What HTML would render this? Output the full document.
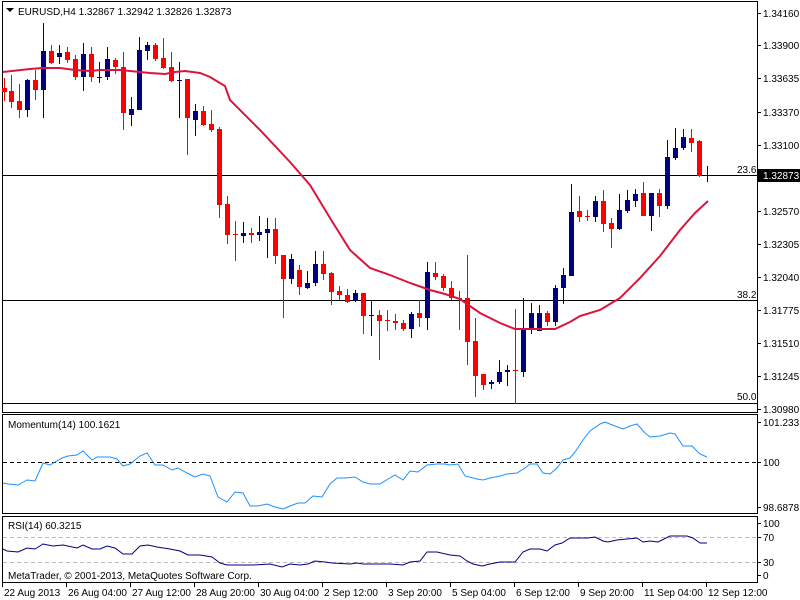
<!DOCTYPE html>
<html><head><meta charset="utf-8"><style>
body{margin:0;background:#fff;}
svg{display:block;font-family:"Liberation Sans",sans-serif;font-size:10px;}
</style></head><body>
<svg width="800" height="600" xmlns="http://www.w3.org/2000/svg">
<rect width="800" height="600" fill="#fff"/>
<g stroke="#000" fill="none" stroke-width="1">
<rect x="2.5" y="1.5" width="755" height="411"/>
<rect x="2.5" y="414.5" width="755" height="99"/>
<rect x="2.5" y="516.5" width="755" height="66"/>
<line x1="2" y1="175.5" x2="757" y2="175.5"/>
<line x1="2" y1="300.5" x2="757" y2="300.5"/>
<line x1="2" y1="403.5" x2="757" y2="403.5"/>
</g>
<g stroke="#000">
<line x1="757" y1="13.5" x2="761" y2="13.5"/><line x1="757" y1="45.5" x2="761" y2="45.5"/><line x1="757" y1="78.5" x2="761" y2="78.5"/><line x1="757" y1="112.5" x2="761" y2="112.5"/><line x1="757" y1="145.5" x2="761" y2="145.5"/><line x1="757" y1="211.5" x2="761" y2="211.5"/><line x1="757" y1="244.5" x2="761" y2="244.5"/><line x1="757" y1="277.5" x2="761" y2="277.5"/><line x1="757" y1="310.5" x2="761" y2="310.5"/><line x1="757" y1="343.5" x2="761" y2="343.5"/><line x1="757" y1="376.5" x2="761" y2="376.5"/><line x1="757" y1="409.5" x2="761" y2="409.5"/>
<line x1="757" y1="422.5" x2="761" y2="422.5"/><line x1="757" y1="462.5" x2="761" y2="462.5"/><line x1="757" y1="507.5" x2="761" y2="507.5"/>
<line x1="757" y1="523.5" x2="761" y2="523.5"/><line x1="757" y1="537.5" x2="761" y2="537.5"/><line x1="757" y1="562.5" x2="761" y2="562.5"/><line x1="757" y1="575.5" x2="761" y2="575.5"/>
<line x1="2.5" y1="582" x2="2.5" y2="587"/><line x1="66.5" y1="582" x2="66.5" y2="587"/><line x1="130.5" y1="582" x2="130.5" y2="587"/><line x1="194.5" y1="582" x2="194.5" y2="587"/><line x1="258.5" y1="582" x2="258.5" y2="587"/><line x1="322.5" y1="582" x2="322.5" y2="587"/><line x1="386.5" y1="582" x2="386.5" y2="587"/><line x1="450.5" y1="582" x2="450.5" y2="587"/><line x1="514.5" y1="582" x2="514.5" y2="587"/><line x1="578.5" y1="582" x2="578.5" y2="587"/><line x1="642.5" y1="582" x2="642.5" y2="587"/><line x1="706.5" y1="582" x2="706.5" y2="587"/>
</g>
<g fill="#000">
<text x="763" y="17">1.34160</text><text x="763" y="49">1.33900</text><text x="763" y="82">1.33635</text><text x="763" y="116">1.33370</text><text x="763" y="149">1.33100</text><text x="763" y="215">1.32570</text><text x="763" y="248">1.32305</text><text x="763" y="281">1.32040</text><text x="763" y="314">1.31775</text><text x="763" y="347">1.31510</text><text x="763" y="380">1.31245</text><text x="763" y="413">1.30980</text>
<text x="763" y="426">101.2331</text><text x="763" y="466">100</text><text x="763" y="511">98.6878</text>
<text x="763" y="527">100</text><text x="763" y="541">70</text><text x="763" y="566">30</text><text x="763" y="579">0</text>
<text x="737" y="173">23.6</text><text x="737" y="298">38.2</text><text x="737" y="400">50.0</text>
<text x="4" y="596">22 Aug 2013</text><text x="68" y="596">26 Aug 04:00</text><text x="132" y="596">27 Aug 12:00</text><text x="196" y="596">28 Aug 20:00</text><text x="260" y="596">30 Aug 04:00</text><text x="324" y="596">2 Sep 12:00</text><text x="388" y="596">3 Sep 20:00</text><text x="452" y="596">5 Sep 04:00</text><text x="516" y="596">6 Sep 12:00</text><text x="580" y="596">9 Sep 20:00</text><text x="644" y="596">11 Sep 04:00</text><text x="708" y="596">12 Sep 12:00</text>
<text x="18" y="15">EURUSD,H4  1.32867 1.32942 1.32826 1.32873</text>
<path d="M6 8h8l-4 4z"/>
<text x="8" y="428">Momentum(14) 100.1621</text>
<text x="8" y="529">RSI(14) 60.3215</text>
<text x="8" y="579">MetaTrader, © 2001-2013, MetaQuotes Software Corp.</text>
</g>
<rect x="757" y="169" width="43" height="13" fill="#000"/>
<text x="763" y="179" fill="#fff">1.32873</text>
<g stroke-dasharray="4,3">
<line x1="3" y1="462.5" x2="757" y2="462.5" stroke="#000"/>
<line x1="3" y1="537.5" x2="757" y2="537.5" stroke="#bbb"/>
<line x1="3" y1="562.5" x2="757" y2="562.5" stroke="#bbb"/>
</g>
<!-- red candles -->
<path stroke="#ff0000" fill="none" d="M4.5 78V101M11.5 75V108M19.5 84V118M35.5 70V100M51.5 45V64M67.5 47V63M75.5 55V80M91.5 47V82M115.5 58V74M123.5 52V130M155.5 43V61M163.5 38V69M171.5 52V82M187.5 79V155M203.5 106V126M211.5 110V132M219.5 127V218M227.5 196V244M235.5 221V261M251.5 228V243M275.5 218V264M283.5 255V318M299.5 265V295M323.5 251V280M331.5 272V305M339.5 286V300M347.5 289V303M363.5 293V334M379.5 310V360M387.5 310V331M395.5 314V330M403.5 320V331M419.5 300V327M435.5 262V280M443.5 274V291M451.5 281V300M459.5 291V330M467.5 255V365M475.5 318V397M483.5 374V390M515.5 309V404M547.5 311V326M579.5 196V222M587.5 210V221M603.5 190V232M611.5 218V248M643.5 182V216M659.5 189V217M691.5 129V152M699.5 140V177"/>
<path fill="#ff0000" d="M2 88h5v4h-5zM9 91h5v11h-5zM17 101h5v9h-5zM33 80h5v10h-5zM49 51h5v12h-5zM65 52h5v8h-5zM73 59h5v18h-5zM89 54h5v23h-5zM113 60h5v7h-5zM121 67h5v46h-5zM153 45h5v14h-5zM161 58h5v10h-5zM169 67h5v14h-5zM185 79h5v39h-5zM201 111h5v14h-5zM209 124h5v6h-5zM217 129h5v76h-5zM225 204h5v31h-5zM233 234h5v1h-5zM249 233h5v2h-5zM273 229h5v27h-5zM281 255h5v24h-5zM297 270h5v17h-5zM321 264h5v10h-5zM329 273h5v19h-5zM337 291h5v4h-5zM345 295h5v7h-5zM361 293h5v23h-5zM377 315h5v6h-5zM385 320h5v1h-5zM393 321h5v2h-5zM401 323h5v6h-5zM417 313h5v5h-5zM433 273h5v4h-5zM441 276h5v12h-5zM449 288h5v10h-5zM457 298h5v1h-5zM465 298h5v44h-5zM473 341h5v35h-5zM481 374h5v11h-5zM513 370h5v1h-5zM545 313h5v9h-5zM577 211h5v6h-5zM585 216h5v1h-5zM601 201h5v23h-5zM609 223h5v6h-5zM641 193h5v23h-5zM657 193h5v13h-5zM689 138h5v5h-5zM697 141h5v35h-5z"/>
<!-- blue candles -->
<path stroke="#000080" fill="none" d="M27.5 79V117M43.5 23V118M59.5 45V64M83.5 43V91M99.5 62V83M107.5 47V80M131.5 97V126M139.5 37V110M147.5 42V60M179.5 62V118M195.5 104V136M243.5 222V243M259.5 216V241M267.5 218V258M291.5 254V284M307.5 271V289M315.5 251V286M355.5 290V302M371.5 300V336M411.5 312V338M427.5 262V330M491.5 380V389M499.5 360V384M507.5 365V386M523.5 298V377M531.5 303V334M539.5 305V331M555.5 285V326M563.5 268V304M571.5 184V276M595.5 196V222M619.5 194V230M627.5 190V213M635.5 189V207M651.5 193V231M667.5 140V209M675.5 128V160M683.5 129V150M707.5 166V182"/>
<path fill="#000080" d="M25 80h5v30h-5zM41 51h5v39h-5zM57 53h5v4h-5zM81 54h5v23h-5zM97 77h5v1h-5zM105 59h5v18h-5zM129 109h5v6h-5zM137 50h5v60h-5zM145 45h5v6h-5zM177 80h5v1h-5zM193 111h5v9h-5zM241 233h5v3h-5zM257 232h5v3h-5zM265 229h5v4h-5zM289 259h5v20h-5zM305 283h5v5h-5zM313 264h5v19h-5zM353 293h5v8h-5zM369 315h5v1h-5zM409 314h5v15h-5zM425 272h5v46h-5zM489 382h5v2h-5zM497 372h5v10h-5zM505 370h5v2h-5zM521 329h5v43h-5zM529 313h5v16h-5zM537 313h5v18h-5zM553 288h5v34h-5zM561 275h5v13h-5zM569 212h5v64h-5zM593 201h5v16h-5zM617 210h5v19h-5zM625 200h5v11h-5zM633 194h5v7h-5zM649 193h5v23h-5zM665 157h5v49h-5zM673 148h5v10h-5zM681 137h5v11h-5zM705 175h5v1h-5z"/>
<polyline fill="none" stroke="#dc143c" stroke-width="2" points="3,72 12,71 30,69 42,68 60,68 75,70 90,71 100,70 120,70 130,71 150,73 165,74 175,72 185,71 200,73 210,77 225,86 230,100 260,130 290,162 310,185 330,218 350,250 370,268 390,275 410,283 430,290 445,294 460,299 480,313 500,323 515,329 540,329 555,329 570,322 580,316 600,310 620,298 640,278 660,256 680,230 695,213 708,201"/>
<polyline fill="none" stroke="#1e90ff" points="3,483 8,484 18,485 27,480 35,481 43,463 50,465 62,458 68,456 77,455 83,451 92,460 97,457 110,457 117,459 123,466 130,464 140,456 147,453 155,465 163,465 172,470 178,468 187,473 195,477 203,474 210,476 218,497 227,502 235,492 243,493 250,506 258,506 267,504 275,507 283,509 290,506 298,503 305,503 313,496 322,497 330,484 337,478 345,478 355,477 363,482 370,484 380,484 388,479 395,475 403,480 410,471 418,472 427,465 437,464 445,464 450,465 458,464 465,476 477,479 483,480 490,478 500,476 507,474 517,473 525,468 530,464 537,464 543,473 550,474 557,468 563,460 570,458 575,452 583,440 590,431 600,424 605,422 615,426 623,429 630,426 637,424 645,433 650,437 660,436 670,433 675,434 683,446 692,446 700,454 707,457"/>
<polyline fill="none" stroke="#000080" points="3,549 7,551 18,552 27,548 35,549 43,544 53,546 63,545 77,548 83,545 92,549 100,549 107,546 115,548 123,554 132,554 140,546 148,545 157,547 170,549 180,551 188,555 200,555 212,557 220,563 227,565 253,565 270,564 282,567 290,564 300,565 308,564 315,561 325,562 332,563 350,564 357,563 363,564 390,564 403,565 410,562 420,561 427,552 437,552 450,555 460,556 467,561 473,564 482,566 490,564 500,562 515,562 523,552 530,549 540,549 547,551 555,545 562,543 570,538 580,538 588,538 595,537 603,541 608,542 617,540 627,539 637,538 643,542 650,541 658,542 670,536 687,536 693,538 700,543 707,543"/>
</svg>
</body></html>
